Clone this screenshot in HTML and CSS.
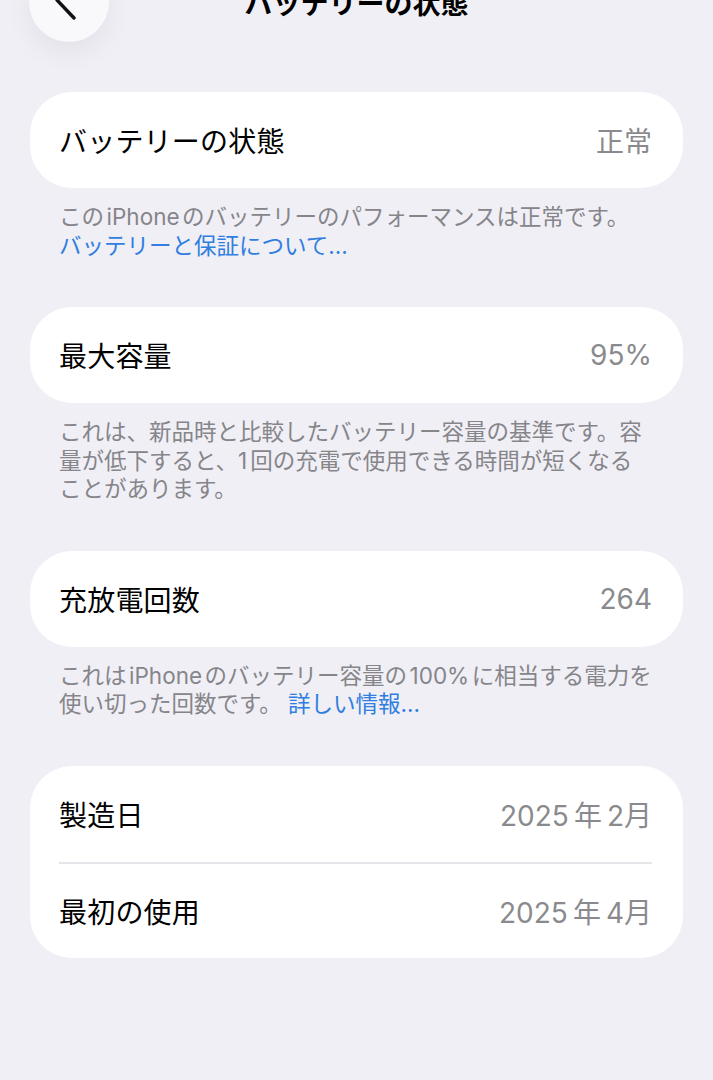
FILE: index.html
```html
<!DOCTYPE html>
<html lang="ja">
<head>
<meta charset="utf-8">
<title>バッテリーの状態</title>
<link rel="stylesheet" href="styles.css">
</head>
<body>
<header class="nav">
  <button class="back" aria-label="戻る">
    <svg width="24" height="40" viewBox="0 0 24 40"><path d="M20 2 L3 20 L20 38" fill="none" stroke="#111" stroke-width="3.4" stroke-linecap="round" stroke-linejoin="round"/></svg>
  </button>
  <h1 class="title">バッテリーの状態</h1>
  <span class="spacer"></span>
</header>
<main class="content">
  <section class="group">
    <div class="card">
      <div class="row"><span class="label">バッテリーの状態</span><span class="value">正常</span></div>
    </div>
    <p class="note">この<span class="lat">iPhone</span>のバッテリーのパフォーマンスは正常です。<br><a class="link">バッテリーと保証について...</a></p>
  </section>
  <section class="group">
    <div class="card">
      <div class="row"><span class="label">最大容量</span><span class="value">95%</span></div>
    </div>
    <p class="note">これは、新品時と比較したバッテリー容量の基準です。容<br>量が低下すると、<span class="lat-r">1</span>回の充電で使用できる時間が短くなる<br>ことがあります。</p>
  </section>
  <section class="group">
    <div class="card">
      <div class="row"><span class="label">充放電回数</span><span class="value">264</span></div>
    </div>
    <p class="note">これは<span class="lat">iPhone</span>のバッテリー容量の<span class="lat">100%</span>に相当する電力を<br>使い切った回数です。 <a class="link">詳しい情報...</a></p>
  </section>
  <section class="group">
    <div class="card">
      <div class="row"><span class="label">製造日</span><span class="value"><span class="num">2025</span>年<span class="num-l">2</span>月</span></div>
      <div class="row divided"><span class="label">最初の使用</span><span class="value"><span class="num">2025</span>年<span class="num-l">4</span>月</span></div>
    </div>
  </section>
</main>
</body>
</html>
```
FILE: styles.css
```css
* { box-sizing: border-box; }
html, body {
  margin: 0;
  padding: 0;
  background: #f0eff5;
  font-family: "Inter", "Noto Sans CJK JP", sans-serif;
  color: #000;
  overflow: hidden;
}
.nav {
  display: grid;
  grid-template-columns: 80px 1fr 80px;
  align-items: center;
  padding: 0 29px;
  height: 80px;
  margin-top: -38px;
}
.back {
  width: 80px;
  height: 80px;
  border-radius: 50%;
  border: none;
  background: #f9f9fb;
  box-shadow: 0 10px 28px rgba(0, 0, 0, 0.06);
  display: flex;
  align-items: center;
  justify-content: center;
  padding: 0 6px 0 0;
}
.back svg { margin-top: -4px; }
.title {
  margin: 0;
  text-align: center;
  font-size: 28px;
  font-weight: 700;
  line-height: 1;
  padding-top: 4px;
}
.content {
  padding: 50px 30px 0;
  display: flex;
  flex-direction: column;
  gap: 47px;
}
.card {
  background: #fff;
  border-radius: 42px;
  padding: 0 31px 0 29px;
}
.row {
  height: 96px;
  display: flex;
  align-items: center;
  justify-content: space-between;
  font-size: 28px;
}
.row.divided { border-top: 2px solid #e6e6ea; height: 96px; }
.label { color: #000; letter-spacing: 0.2px; }
.value { color: #8a8a8e; }
.num { margin-right: 5px; }
.num-l { margin-left: 5px; }
.note {
  margin: 0;
  padding: 15px 0 0 29px;
  font-size: 22.5px;
  line-height: 28.5px;
  color: #85858a;
  white-space: nowrap;
}
.lat { margin: 0 2.5px; }
.lat-r { margin-right: 3px; }
.link { color: #2f7ee0; }
```
